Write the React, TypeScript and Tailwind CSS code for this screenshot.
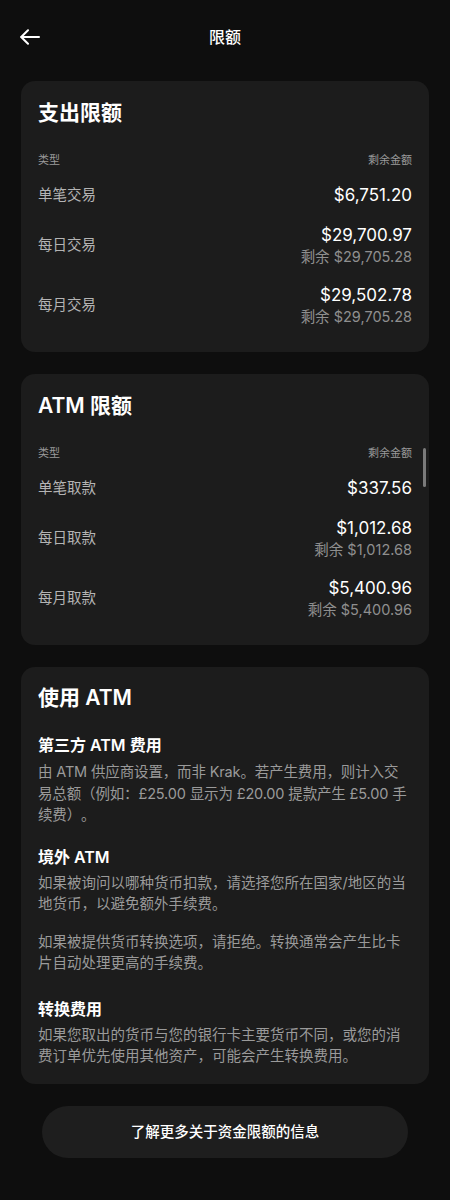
import React from "react";

type Row = { label: string; amount: string; left?: string };

const spendRows: Row[] = [
  { label: "单笔交易", amount: "$6,751.20" },
  { label: "每日交易", amount: "$29,700.97", left: "剩余 $29,705.28" },
  { label: "每月交易", amount: "$29,502.78", left: "剩余 $29,705.28" },
];

const atmRows: Row[] = [
  { label: "单笔取款", amount: "$337.56" },
  { label: "每日取款", amount: "$1,012.68", left: "剩余 $1,012.68" },
  { label: "每月取款", amount: "$5,400.96", left: "剩余 $5,400.96" },
];

function BackArrow() {
  return (
    <svg width="20" height="16" viewBox="0 0 20 16" fill="none" stroke="white" strokeWidth="2" strokeLinecap="round" strokeLinejoin="round">
      <path d="M19 8H1.5" />
      <path d="M8 1.2 1.2 8 8 14.8" />
    </svg>
  );
}

function LimitCard({ title, rows, scroll }: { title: string; rows: Row[]; scroll?: boolean }) {
  return (
    <div className="relative rounded-[14px] bg-[#1c1c1c] px-[17px] pt-[18px] pb-[25px]">
      <h2 className="text-[21px] leading-[28px] font-semibold text-white">{title}</h2>
      <div className="mt-[25px] flex justify-between text-[11px] leading-[16px] text-[#9a9a9a]">
        <span>类型</span>
        <span>剩余金额</span>
      </div>
      <div className="flex flex-col">
        {rows.map((r, i) => (
          <div key={i} className={"flex items-center justify-between " + (i === 0 ? "mt-[15px]" : "mt-[16px]")}>
            <span className="text-[14.5px] text-[#b4b4b4]">{r.label}</span>
            <div className="flex flex-col items-end">
              <span className="text-[17px] leading-[24px] text-white">{r.amount}</span>
              {r.left && <span className="text-[14.5px] leading-[20px] text-[#8f8f8f]">{r.left}</span>}
            </div>
          </div>
        ))}
      </div>
      {scroll && <div className="absolute right-[3px] top-[74px] h-[39px] w-[3px] rounded-full bg-[#7a7a7a]" />}
    </div>
  );
}

export default function App() {
  return (
    <div
      className="min-h-[1200px] w-[450px] bg-[#0e0e0e] px-[21px] pb-10"
      style={{ fontFamily: "Inter, 'Noto Sans CJK SC', sans-serif" }}
    >
      <div className="relative flex h-[74px] items-center justify-center">
        <button className="absolute left-[-1px] top-[29px]">
          <BackArrow />
        </button>
        <span className="text-[16px] font-medium text-white">限额</span>
      </div>

      <div className="mt-[7px] flex flex-col gap-[22px]">
        <LimitCard title="支出限额" rows={spendRows} />
        <LimitCard title="ATM 限额" rows={atmRows} scroll />

        <div className="rounded-[14px] bg-[#1c1c1c] px-[17px] pt-[17px] pb-[17px] [text-spacing-trim:space-all]">
          <h2 className="text-[21px] leading-[28px] font-semibold text-white">使用 ATM</h2>

          <h3 className="mt-[22px] text-[16px] leading-[22px] font-semibold text-white">第三方 ATM 费用</h3>
          <p className="mt-[5px] text-[14.5px] leading-[21.5px] tracking-[-0.15px] text-[#9a9a9a]">
            由 ATM 供应商设置，而非 Krak。若产生费用，则计入交易总额（例如：£25.00 显示为 £20.00 提款产生 £5.00 手续费）。
          </p>

          <h3 className="mt-[20px] text-[16px] leading-[22px] font-semibold text-white">境外 ATM</h3>
          <p className="mt-[4px] text-[14.5px] leading-[21.5px] text-[#9a9a9a]">
            如果被询问以哪种货币扣款，请选择您所在国家/地区的当地货币，以避免额外手续费。
          </p>
          <p className="mt-[16px] text-[14.5px] leading-[21.5px] text-[#9a9a9a]">
            如果被提供货币转换选项，请拒绝。转换通常会产生比卡片自动处理更高的手续费。
          </p>

          <h3 className="mt-[24px] text-[16px] leading-[22px] font-semibold text-white">转换费用</h3>
          <p className="mt-[4px] text-[14.5px] leading-[21.5px] text-[#9a9a9a]">
            如果您取出的货币与您的银行卡主要货币不同，或您的消费订单优先使用其他资产，可能会产生转换费用。
          </p>
        </div>

        <div className="flex justify-center">
          <button className="h-[52px] w-[366px] rounded-full bg-[#1e1e1e] text-[14.5px] font-medium text-white">
            了解更多关于资金限额的信息
          </button>
        </div>
      </div>
    </div>
  );
}
